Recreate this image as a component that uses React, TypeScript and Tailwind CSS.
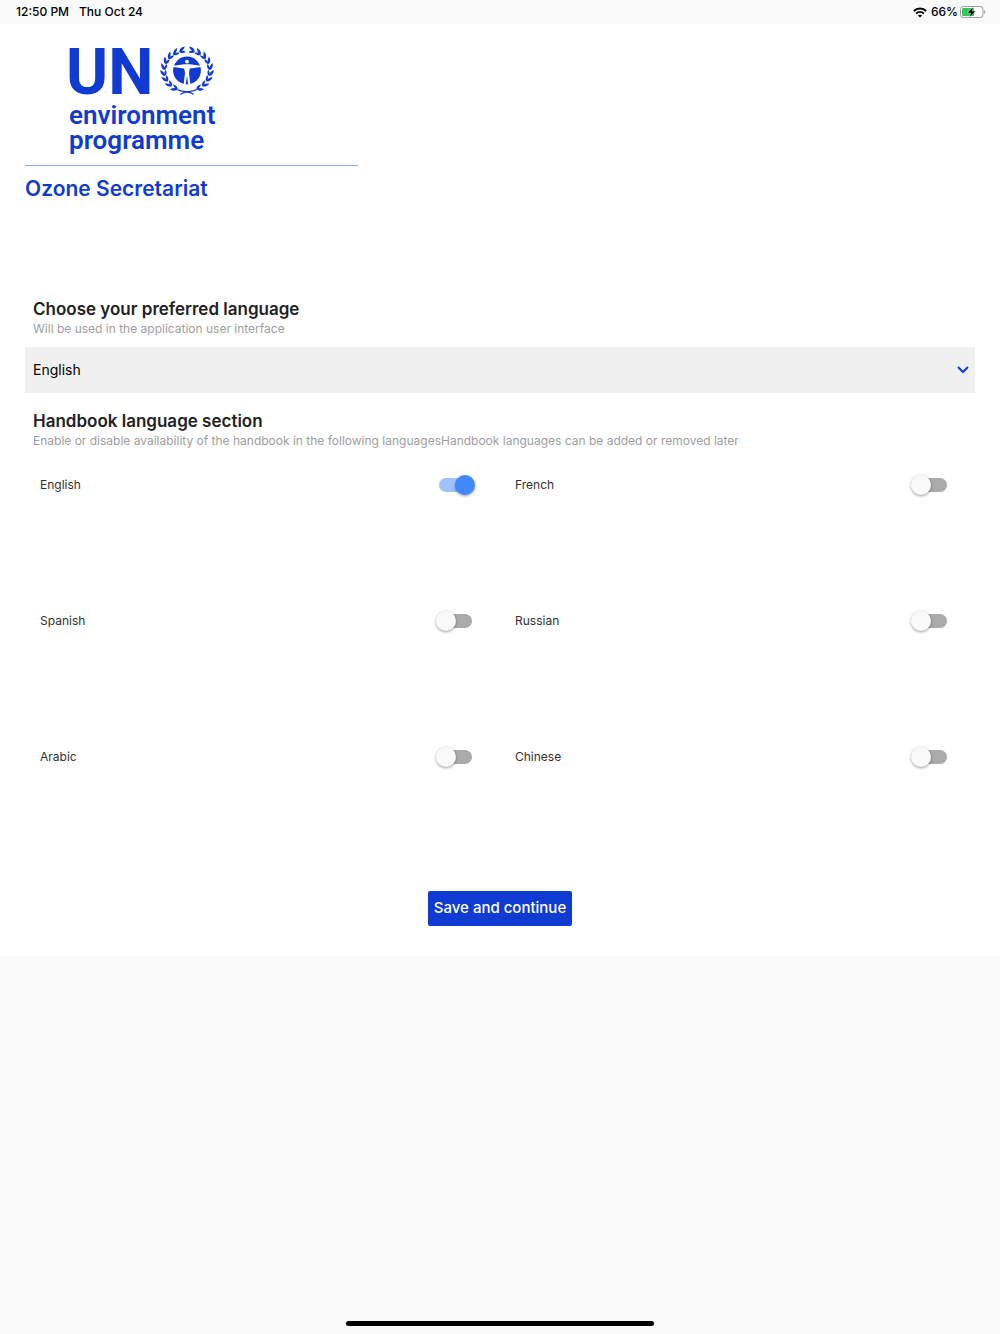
import { useState } from "react";

const languages = ["English", "French", "Spanish", "Russian", "Arabic", "Chinese"];

const LEAF = "M0 0C1.5 -1.2 1.9 -4 0.6 -7C-1.2 -5 -1.7 -2 0 0Z";

function Branch() {
  const leaves = [];
  for (let i = 0; i < 9; i++) {
    const deg = 114 + i * 17;
    const a = (deg * Math.PI) / 180;
    const x = 28 + 22.8 * Math.cos(a);
    const y = 24.8 + 20.2 * Math.sin(a);
    leaves.push(
      <g key={i} transform={`translate(${x.toFixed(2)} ${y.toFixed(2)}) rotate(${deg - 178})`}>
        <path d={LEAF} transform="rotate(-30) scale(1.1)" />
        <path d={LEAF} transform="rotate(24) scale(-0.95 0.95)" />
      </g>
    );
  }
  return (
    <g>
      {leaves}
      <path d="M34.5 48.5C30 44.2 25 46.8 18.5 43.6" fill="none" stroke="currentColor" strokeWidth="1.2" />
    </g>
  );
}

function Emblem() {
  return (
    <svg viewBox="0 0 56 50" className="mb-1 h-[50px] w-14" fill="currentColor" aria-hidden="true">
      <Branch />
      <g transform="translate(56 0) scale(-1 1)">
        <Branch />
      </g>
      <circle cx="28" cy="24.5" r="13.9" />
      <g fill="#fff">
        <circle cx="28" cy="15.6" r="1.9" />
        <path d="M14 19.8L25.5 18.2H30.5L42 19.8V21L30.8 22.4L30 27L31.4 38.4H29.2L28 29.5L26.8 38.4H24.6L26 27L25.2 22.4L14 21Z" />
      </g>
    </svg>
  );
}

function StatusBar() {
  return (
    <div className="flex h-6 items-center justify-between bg-[#fafafa] px-4 text-xs font-medium text-black">
      <div className="flex gap-[10px]">
        <span>12:50 PM</span>
        <span>Thu Oct 24</span>
      </div>
      <div className="-mr-[2px] flex items-center gap-1">
        <svg viewBox="0 0 14 11" className="h-[11px] w-[14px]" fill="none" stroke="#000" strokeWidth="2" aria-hidden="true">
          <path d="M0.8 4C4.3 0.6 9.7 0.6 13.2 4" />
          <path d="M3.1 6.5C5.4 4.4 8.6 4.4 10.9 6.5" />
          <path d="M7 10.6L4.9 8.5C6.1 7.4 7.9 7.4 9.1 8.5Z" fill="#000" stroke="none" />
        </svg>
        <span>66%</span>
        <svg viewBox="0 0 26 12" className="-ml-0.5 h-3 w-[26px]" aria-hidden="true">
          <rect x="0.5" y="0.5" width="22.5" height="11" rx="3" fill="#fff" stroke="#9a9a9a" />
          <path d="M24.2 4C25.6 4.5 25.6 7.5 24.2 8Z" fill="#9a9a9a" />
          <path d="M3.5 2H14V10H3.5C2.5 10 2 9.5 2 8.5V3.5C2 2.5 2.5 2 3.5 2Z" fill="#35c759" />
          <path d="M13.2 0.8L7.4 6.9H10.7L9.6 11.2L15.8 5.1H12.3Z" fill="#000" stroke="#fff" strokeWidth="0.4" />
        </svg>
      </div>
    </div>
  );
}

function Toggle({ name, initial }: { name: string; initial: boolean }) {
  const [on, setOn] = useState(initial);
  const id = `lang-${name.toLowerCase()}`;
  return (
    <div className="flex h-[136px] items-start justify-between pr-[25px] pl-[15px]">
      <label htmlFor={id} className="text-xs leading-5 text-[#303030]">
        {name}
      </label>
      <input
        id={id}
        type="checkbox"
        role="switch"
        checked={on}
        onChange={(e) => setOn(e.target.checked)}
        className="relative h-5 w-[39px] cursor-pointer appearance-none before:absolute before:inset-x-[3px] before:inset-y-[3px] before:rounded-full before:bg-[#aaaaaa] after:absolute after:top-0 after:left-0 after:size-5 after:rounded-full after:bg-[#fafafa] after:shadow-[0_1px_3px_rgba(0,0,0,0.4)] checked:before:bg-[#a0c3ff] checked:after:left-[19px] checked:after:bg-[#4189fb]"
      />
    </div>
  );
}

export default function App() {
  const [language, setLanguage] = useState("English");
  return (
    <div className="flex min-h-screen flex-col bg-[#fafafa] font-['Inter','Liberation_Sans',sans-serif]">
      <StatusBar />
      <main className="bg-white px-[25px] pb-[30px]">
        <header className="pt-[22px] text-[#103bd2]">
          <div className="pl-11 font-['Roboto','Liberation_Sans',sans-serif]">
            <div className="-ml-[3px] flex h-[54px] items-center gap-[6px]">
              <span className="text-[64px] leading-[54px] font-bold">UN</span>
              <Emblem />
            </div>
            <div className="mt-[3px] text-[26px] leading-[25px] font-semibold">
              environment
              <br />
              programme
            </div>
          </div>
          <div className="mt-3 h-px w-1/3 min-w-[333px] bg-[#94a7e6]" />
          <h1 className="mt-[9px] text-[21px] leading-7 font-semibold">Ozone Secretariat</h1>
        </header>

        <form onSubmit={(e) => e.preventDefault()}>
          <div className="mt-[94px] px-2">
            <h2 className="text-[17px] leading-6 font-semibold text-[#222222]">
              <label htmlFor="ui-language">Choose your preferred language</label>
            </h2>
            <p className="text-xs leading-4 text-[#9e9e9e]">Will be used in the application user interface</p>
          </div>
          <div className="relative mt-[10px]">
            <select
              id="ui-language"
              value={language}
              onChange={(e) => setLanguage(e.target.value)}
              className="block h-[46px] w-full appearance-none bg-[#f0f0f0] px-2 text-sm text-black"
            >
              {languages.map((l) => (
                <option key={l}>{l}</option>
              ))}
            </select>
            <svg viewBox="0 0 12 8" className="pointer-events-none absolute top-[19px] right-[6px] h-2 w-3" fill="none" stroke="#103bd2" strokeWidth="2" aria-hidden="true">
              <path d="M1 1L6 6L11 1" />
            </svg>
          </div>

          <div className="mt-4 px-2">
            <h2 className="text-[17px] leading-6 font-semibold text-[#222222]">Handbook language section</h2>
            <p className="text-xs leading-4 text-[#9e9e9e]">
              Enable or disable availability of the handbook in the following languagesHandbook languages can be added or removed later
            </p>
          </div>
          <div className="mt-[26px] grid grid-cols-2">
            {languages.map((l) => (
              <Toggle key={l} name={l} initial={l === "English"} />
            ))}
          </div>
          <div className="mt-2 flex justify-center">
            <button type="submit" className="h-[35px] rounded-xs bg-[#103bd2] px-[6px] text-[15px] font-medium text-white">
              Save and continue
            </button>
          </div>
        </form>
      </main>
      <div className="flex flex-1 items-end justify-center pb-2">
        <div className="h-[5px] w-[308px] rounded-full bg-black" />
      </div>
    </div>
  );
}
